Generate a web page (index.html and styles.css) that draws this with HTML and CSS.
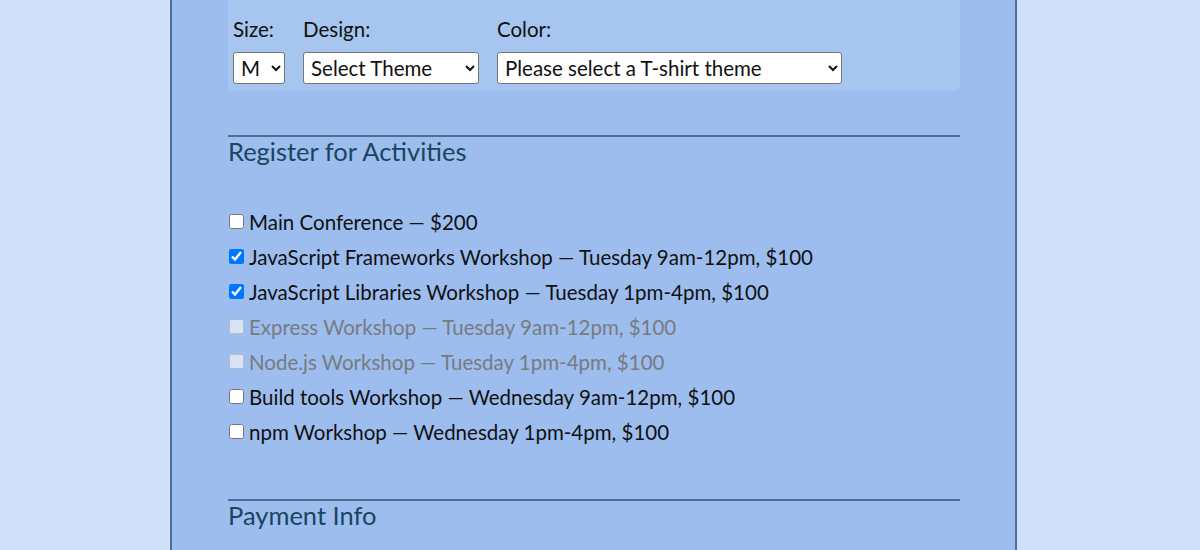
FILE: index.html
```html
<!DOCTYPE html>
<html>
<head>
    <title>Conference Registration</title>
    <link rel="stylesheet" href="styles.css">
</head>
<body>
    <div class="container">
        <form>
            <fieldset class="shirt-box">
                <div class="shirt-field">
                    <label for="size">Size:</label>
                    <select id="size" class="select-size">
                        <option>M</option>
                    </select>
                </div>
                <div class="shirt-field">
                    <label for="design">Design:</label>
                    <select id="design" class="select-design">
                        <option>Select Theme</option>
                    </select>
                </div>
                <div class="shirt-field">
                    <label for="color">Color:</label>
                    <select id="color" class="select-color">
                        <option>Please select a T-shirt theme</option>
                    </select>
                </div>
            </fieldset>

            <fieldset class="activities">
                <legend>Register for Activities</legend>
                <label class="activity"><input type="checkbox" name="all"> Main Conference — $200</label>
                <label class="activity"><input type="checkbox" name="js-frameworks" checked> JavaScript Frameworks Workshop — Tuesday 9am-12pm, $100</label>
                <label class="activity"><input type="checkbox" name="js-libs" checked> JavaScript Libraries Workshop — Tuesday 1pm-4pm, $100</label>
                <label class="activity disabled"><input type="checkbox" name="express" disabled> Express Workshop — Tuesday 9am-12pm, $100</label>
                <label class="activity disabled"><input type="checkbox" name="node" disabled> Node.js Workshop — Tuesday 1pm-4pm, $100</label>
                <label class="activity"><input type="checkbox" name="build-tools"> Build tools Workshop — Wednesday 9am-12pm, $100</label>
                <label class="activity"><input type="checkbox" name="npm"> npm Workshop — Wednesday 1pm-4pm, $100</label>
            </fieldset>

            <fieldset class="payment">
                <legend>Payment Info</legend>
            </fieldset>
        </form>
    </div>
</body>
</html>
```

FILE: styles.css
```css
html, body {
    margin: 0;
    height: 100%;
    overflow: hidden;
}
body {
    background: #cfe0f8;
    font-family: Lato, "Open Sans", sans-serif;
    color: #111;
}
.container {
    display: flow-root;
    width: 847px;
    margin-left: 170px;
    min-height: 100%;
    background: #9cbdee;
    border-left: 2px solid #4a6f98;
    border-right: 2px solid #4a6f98;
    padding: 0 55px 0 56px;
    box-sizing: border-box;
}
fieldset {
    border: none;
    margin: 0;
    padding: 0;
}
.shirt-box {
    display: flex;
    gap: 18px;
    background: #a6c5ef;
    border-radius: 6px;
    margin-top: -8px;
    padding: 25px 5px 7px;
}
.shirt-field {
    display: flex;
    flex-direction: column;
}
.shirt-field label {
    font-size: 20.5px;
    margin-bottom: 11px;
}
select {
    font-family: inherit;
    font-size: 20.5px;
    height: 32px;
    padding: 0 3px;
    background: #fff;
    color: #111;
    border: 1px solid #767676;
    border-radius: 3px;
}
.select-size {
    width: 52px;
}
.select-design {
    width: 176px;
}
.select-color {
    width: 345px;
}
legend {
    display: block;
    width: 100%;
    border-top: 2px solid #4a6d90;
    padding: 0;
    font-size: 25.5px;
    line-height: 1.1;
    color: #17475f;
}
.activities {
    margin-top: 44px;
}
.activities legend {
    margin-bottom: 39px;
}
.activity {
    display: flex;
    align-items: center;
    gap: 5px;
    font-size: 20.5px;
    height: 35px;
}
.activity input {
    margin: 0 0 0 1px;
    width: 15px;
    height: 15px;
}
.activity.disabled {
    color: #777b80;
}
.payment {
    margin-top: 50px;
}
```
